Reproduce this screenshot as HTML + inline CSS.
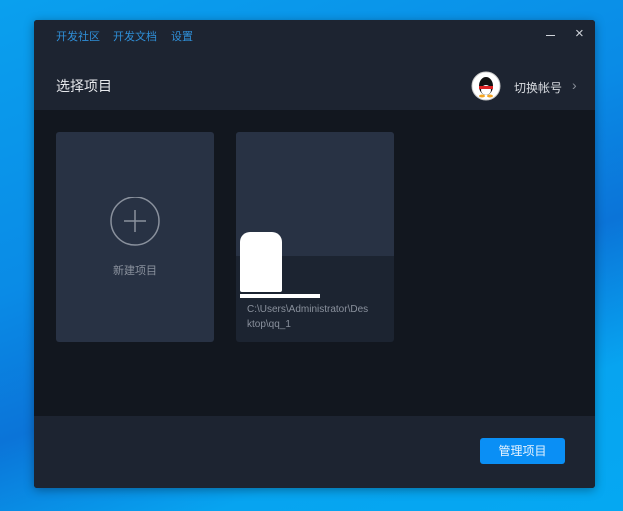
<!DOCTYPE html>
<html><head><meta charset="utf-8"><style>
*{margin:0;padding:0;box-sizing:border-box}
body{width:623px;height:511px;overflow:hidden;position:relative;font-family:"Liberation Sans","Noto Sans CJK SC",sans-serif;
background:linear-gradient(160deg,#0aa0ee 0%,#0a8be6 40%,#0b74d8 60%,#07a4f0 80%,#05a8f2 100%)}
.win{position:absolute;left:34px;top:20px;width:561px;height:468px;background:#12171f;border-radius:3px;overflow:hidden;box-shadow:0 2px 10px rgba(0,0,0,.35)}
.head{position:absolute;left:0;top:0;width:100%;height:90px;background:#1d2431}
.foot{position:absolute;left:0;top:396px;width:100%;height:72px;background:#1d2431}
.nav{position:absolute;top:8px;font-size:11px;color:#2f8fd8}
.title{position:absolute;left:22px;top:56px;font-size:14px;color:#e6e8ec}
.card{position:absolute;top:112px;width:158px;height:210px;background:#283244;border-radius:3px;overflow:hidden}
.btn{position:absolute;left:446px;top:418px;width:85px;height:26px;background:#0a8ff5;border-radius:3px;color:#e8f4ff;font-size:12px;text-align:center;line-height:26px}
</style></head><body>
<div class="win">
<div class="head"></div>
<div class="nav" style="left:22px">开发社区</div>
<div class="nav" style="left:79px">开发文档</div>
<div class="nav" style="left:137px">设置</div>
<div style="position:absolute;left:512px;top:15px;width:9px;height:1px;background:#d0d4da"></div>
<div style="position:absolute;left:541px;top:5px;color:#d0d4da;font-size:15px">×</div>
<div class="title">选择项目</div>
<svg style="position:absolute;left:437px;top:51px" width="30" height="30" viewBox="0 0 30 30">
<circle cx="15" cy="15" r="14" fill="#fff" stroke="#ccc"/>
<ellipse cx="15" cy="15" rx="7" ry="9" fill="#111"/>
<ellipse cx="15" cy="19" rx="5" ry="5" fill="#fff"/>
<rect x="8" y="15" width="14" height="3" fill="#d22"/>
<ellipse cx="11" cy="25" rx="3" ry="1.5" fill="#f5a623"/><ellipse cx="19" cy="25" rx="3" ry="1.5" fill="#f5a623"/>
</svg>
<div style="position:absolute;left:480px;top:59px;font-size:12px;color:#d8dbe0">切换帐号</div>
<div style="position:absolute;left:538px;top:57px;font-size:14px;color:#8a909a">›</div>
<div class="card" style="left:22px">
<svg style="position:absolute;left:54px;top:65px" width="50" height="50"><circle cx="25" cy="24" r="24" fill="none" stroke="#8a919d" stroke-width="1.5"/><path d="M14 24h22M25 13v22" stroke="#8a919d" stroke-width="1.5"/></svg>
<div style="position:absolute;left:0;width:100%;top:130px;text-align:center;font-size:11px;color:#8a919d">新建项目</div>
</div>
<div class="card" style="left:202px;background:#1c2431">
<div style="height:124px;background:#283244"></div>
<div style="position:absolute;left:4px;top:100px;width:42px;height:60px;background:#fff;border-radius:10px 10px 2px 2px"></div>
<div style="position:absolute;left:4px;top:162px;width:80px;height:4px;background:#fff"></div>
<div style="position:absolute;left:11px;top:170px;font-size:10px;line-height:15px;color:#8a919d;width:140px">C:\Users\Administrator\Des<br>ktop\qq_1</div>
</div>
<div class="foot"></div>
<div class="btn">管理项目</div>
</div>
</body></html>
